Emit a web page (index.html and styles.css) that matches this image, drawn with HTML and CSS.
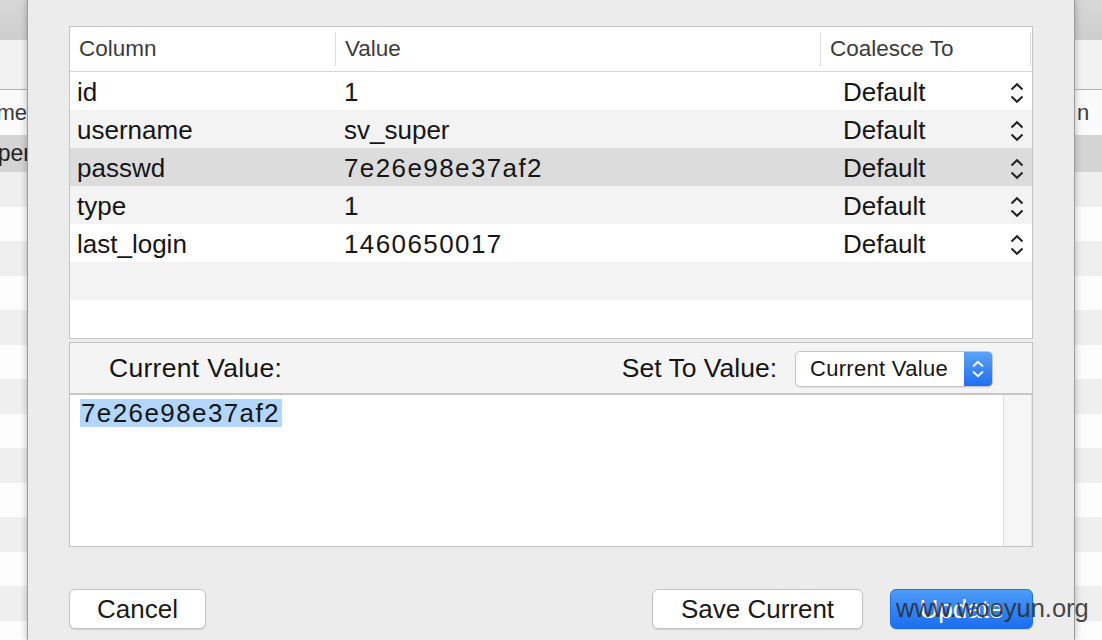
FILE: index.html
```html
<!DOCTYPE html>
<html lang="en">
<head>
    <meta charset="UTF-8">
    <title>Edit Row</title>
    <link rel="stylesheet" href="styles.css">
</head>
<body>
    <div class="bg-strip bg-left">
        <div class="bg-toolbar"></div>
        <div class="bg-tabs"></div>
        <div class="bg-head"><span>me</span></div>
        <div class="bg-sel"><span class="cut">per</span></div>
        <div class="bg-rows"></div>
    </div>

    <div class="sheet">
        <div class="grid-box">
            <div class="grid-row grid-head">
                <div class="cell">Column</div>
                <div class="cell sep">Value</div>
                <div class="cell sep">Coalesce To</div>
                <div class="cell sep"></div>
            </div>
            <div class="grid-row">
                <div class="cell">id</div>
                <div class="cell num">1</div>
                <div class="cell coalesce">Default <svg class="stepper" viewBox="0 0 14 22"><path d="M1.5 7.5L7 2.2L12.5 7.5M1.5 14.5L7 19.8L12.5 14.5"/></svg></div>
            </div>
            <div class="grid-row alt">
                <div class="cell">username</div>
                <div class="cell">sv_super</div>
                <div class="cell coalesce">Default <svg class="stepper" viewBox="0 0 14 22"><path d="M1.5 7.5L7 2.2L12.5 7.5M1.5 14.5L7 19.8L12.5 14.5"/></svg></div>
            </div>
            <div class="grid-row selected">
                <div class="cell">passwd</div>
                <div class="cell num">7e26e98e37af2</div>
                <div class="cell coalesce">Default <svg class="stepper" viewBox="0 0 14 22"><path d="M1.5 7.5L7 2.2L12.5 7.5M1.5 14.5L7 19.8L12.5 14.5"/></svg></div>
            </div>
            <div class="grid-row alt">
                <div class="cell">type</div>
                <div class="cell num">1</div>
                <div class="cell coalesce">Default <svg class="stepper" viewBox="0 0 14 22"><path d="M1.5 7.5L7 2.2L12.5 7.5M1.5 14.5L7 19.8L12.5 14.5"/></svg></div>
            </div>
            <div class="grid-row">
                <div class="cell">last_login</div>
                <div class="cell num">1460650017</div>
                <div class="cell coalesce">Default <svg class="stepper" viewBox="0 0 14 22"><path d="M1.5 7.5L7 2.2L12.5 7.5M1.5 14.5L7 19.8L12.5 14.5"/></svg></div>
            </div>
            <div class="grid-row alt"></div>
            <div class="grid-row"></div>
        </div>

        <div class="value-box">
            <div class="value-head">
                <span class="value-label">Current Value:</span>
                <span>Set To Value:</span>
                <div class="popup">
                    <span class="popup-text">Current Value</span>
                    <span class="popup-arrows"><svg viewBox="0 0 12 18"><path d="M1 6.5L6 1.8L11 6.5M1 11.5L6 16.2L11 11.5"/></svg></span>
                </div>
            </div>
            <div class="value-body">
                <div class="value-text"><span class="hilite num">7e26e98e37af2</span></div>
                <div class="value-scroll"></div>
            </div>
        </div>

        <div class="buttons">
            <button class="btn btn-cancel">Cancel</button>
            <div class="btn-group">
                <button class="btn btn-save">Save Current</button>
                <button class="btn btn-update">Update</button>
            </div>
        </div>
    </div>

    <div class="bg-strip bg-right">
        <div class="bg-toolbar"></div>
        <div class="bg-tabs"></div>
        <div class="bg-head"><span class="tail">n</span></div>
        <div class="bg-sel"></div>
        <div class="bg-rows"></div>
    </div>

    <div class="watermark">www.wooyun.org</div>
</body>
</html>
```

FILE: styles.css
```css
/* base */
body, html {
    margin: 0;
    padding: 0;
    height: 640px;
    overflow: hidden;
    font-family: 'Liberation Sans', Arial, sans-serif;
    color: #151515;
}

body {
    display: flex;
    position: relative;
}

/* window behind the sheet */
.bg-strip {
    width: 27px;
    flex: none;
    display: flex;
    flex-direction: column;
    overflow: hidden;
    font-size: 22px;
    color: #3a3a3a;
    white-space: nowrap;
}

.bg-toolbar {
    height: 40px;
    background: linear-gradient(#d7d7d7, #cecece);
}

.bg-tabs {
    height: 49px;
    background-color: #f2f2f2;
    border-bottom: 1px solid #b2b2b2;
}

.bg-head {
    height: 45px;
    background-color: #fafafa;
    display: flex;
    align-items: center;
}

.bg-sel {
    height: 37px;
    background-color: #d4d4d4;
    display: flex;
    align-items: center;
    color: #222;
    font-size: 23px;
}

.bg-rows {
    flex: 1;
    background: repeating-linear-gradient(#efefef 0, #efefef 35px, #fcfcfc 35px, #fcfcfc 69px);
}

.bg-left .bg-head, .bg-left .bg-sel {
    justify-content: flex-end;
}

.bg-left .cut {
    margin-right: -4px;
}

.bg-right .tail {
    padding-left: 2px;
}

/* sheet */
.sheet {
    width: 964px;
    flex: none;
    padding: 26px 41px 0;
    background-color: #ececec;
    border-left: 1px solid #9c9c9c;
    border-right: 1px solid #9c9c9c;
    box-shadow: 0 0 7px rgba(0, 0, 0, 0.28);
    position: relative;
    z-index: 1;
    display: flex;
    flex-direction: column;
}

.grid-box {
    border: 1px solid #c4c4c4;
    background-color: #fff;
}

.grid-row {
    display: grid;
    grid-template-columns: 265px 485px 210px 1fr;
    height: 38px;
    font-size: 26px;
}

.grid-row.alt {
    background-color: #f3f3f3;
}

.grid-row.selected {
    background-color: #dcdcdc;
}

.grid-head {
    height: 44px;
    border-bottom: 1px solid #d4d4d4;
    font-size: 22.5px;
    color: #3b3b3b;
}

.cell {
    display: flex;
    align-items: center;
    padding-left: 7px;
    padding-top: 3px;
    white-space: nowrap;
}

.grid-head .cell {
    padding-left: 9px;
    padding-top: 0;
}

.grid-row .cell:nth-child(2) {
    padding-left: 9px;
}

.grid-head .sep {
    border-left: 1px solid #dedede;
    margin: 5px 0;
}

.num {
    letter-spacing: 1.4px;
}

.coalesce {
    padding-left: 23px;
    padding-right: 6px;
    justify-content: space-between;
}

.stepper {
    width: 14px;
    height: 22px;
}

.stepper path {
    fill: none;
    stroke: #222;
    stroke-width: 2;
}

/* current value panel */
.value-box {
    margin-top: 3px;
    border: 1px solid #c2c2c2;
    background-color: #fff;
}

.value-head {
    height: 49px;
    background-color: #f4f4f4;
    border-bottom: 2px solid #c6c6c6;
    display: flex;
    align-items: center;
    font-size: 26.5px;
    padding: 1px 39px 0;
}

.value-label {
    flex: 1;
    letter-spacing: 0.3px;
}

.popup {
    margin-left: 18px;
    width: 198px;
    height: 36px;
    box-sizing: border-box;
    border: 1px solid #c4c4c4;
    border-radius: 5px;
    background-color: #fff;
    display: flex;
    overflow: hidden;
    box-shadow: 0 1px 1px rgba(0, 0, 0, 0.08);
}

.popup-text {
    flex: 1;
    font-size: 22px;
    padding-left: 14px;
    line-height: 34px;
    letter-spacing: 0.3px;
}

.popup-arrows {
    width: 28px;
    background: linear-gradient(#5aa3fb, #1d6ff2);
    display: flex;
    align-items: center;
    justify-content: center;
}

.popup-arrows svg {
    width: 12px;
    height: 18px;
}

.popup-arrows path {
    fill: none;
    stroke: #fff;
    stroke-width: 1.8;
}

.value-body {
    height: 151px;
    display: flex;
}

.value-text {
    flex: 1;
    padding: 3px 0 0 10px;
    font-size: 26px;
}

.hilite {
    display: inline-block;
    background-color: #b3d6fd;
    line-height: 28px;
    padding: 0 2px 0 1px;
}

.value-scroll {
    width: 27px;
    background-color: #f6f6f6;
    border-left: 1px solid #dedede;
    border-right: 1px solid #e4e4e4;
}

/* buttons */
.buttons {
    margin-top: 42px;
    display: flex;
    justify-content: space-between;
}

.btn-group {
    display: flex;
    gap: 27px;
}

.btn {
    height: 40px;
    font-family: inherit;
    font-size: 26px;
    color: #1a1a1a;
    background-color: #fff;
    border: 1px solid #c3c3c3;
    border-radius: 6px;
    box-shadow: 0 1px 1px rgba(0, 0, 0, 0.12);
    padding: 1px 0 0;
}

.btn-cancel {
    width: 137px;
}

.btn-save {
    width: 211px;
}

.btn-update {
    width: 143px;
    color: #fff;
    border-color: #1f6fe6;
    background: linear-gradient(#4c9cf9, #1b6ef1);
}

.watermark {
    position: absolute;
    left: 896px;
    top: 594px;
    font-size: 25.5px;
    color: rgba(45, 45, 45, 0.88);
    z-index: 2;
    white-space: nowrap;
}
```
